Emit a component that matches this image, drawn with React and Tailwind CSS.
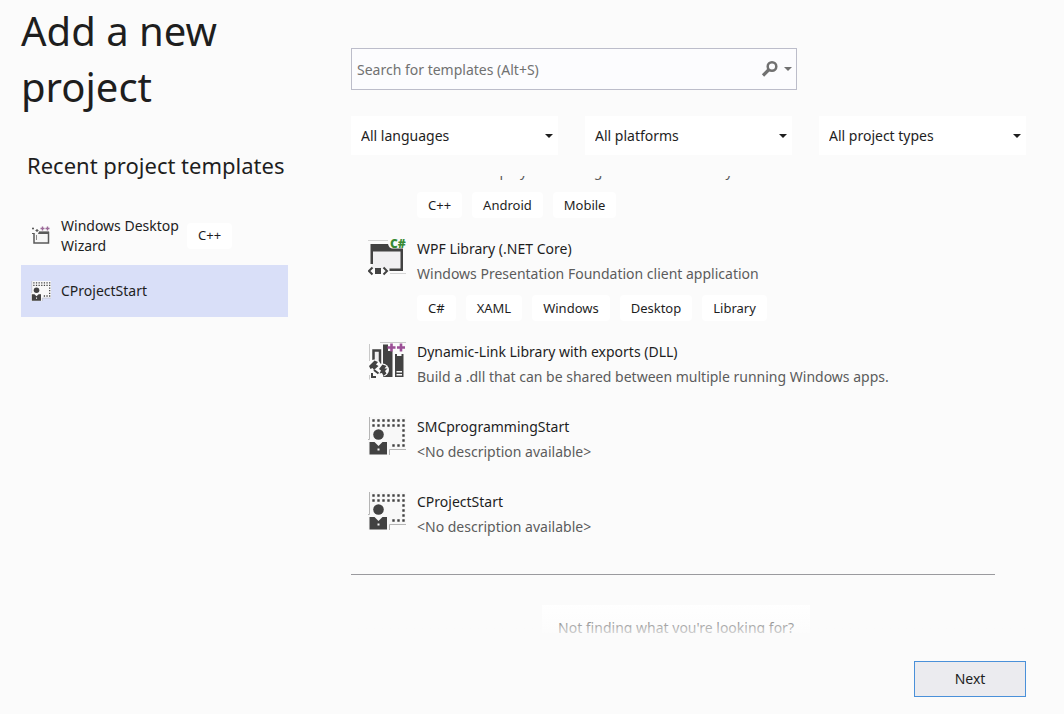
import { useState } from "react";

const templates = [
  {
    id: "android",
    icon: null,
    title: "Shared Library (Android)",
    description: "Build and deploy code using one Android library",
    tags: ["C++", "Android", "Mobile"],
  },
  {
    id: "wpf",
    icon: "wpf",
    title: "WPF Library (.NET Core)",
    description: "Windows Presentation Foundation client application",
    tags: ["C#", "XAML", "Windows", "Desktop", "Library"],
  },
  {
    id: "dll",
    icon: "dll",
    title: "Dynamic-Link Library with exports (DLL)",
    description: "Build a .dll that can be shared between multiple running Windows apps.",
    tags: [],
  },
  { id: "smc", icon: "custom", title: "SMCprogrammingStart", description: "<No description available>", tags: [] },
  { id: "cproject", icon: "custom", title: "CProjectStart", description: "<No description available>", tags: [] },
];

const filters = [
  { label: "Language", options: ["All languages", "C#", "C++", "Python"] },
  { label: "Platform", options: ["All platforms", "Android", "Linux", "Windows"] },
  { label: "Project type", options: ["All project types", "Desktop", "Library", "Mobile"] },
];

const WpfIcon = () => (
  <svg width="38" height="38" viewBox="0 0 38 38" aria-hidden="true">
    <path d="M0 1.5H20M22 34.5H38" stroke="#d4d4d4" fill="none" />
    <path d="M4 12H33V30H4Z" fill="#f0eff1" />
    <path d="M2.5 5H35V32H21.5V29.5H32.5V12.5H5V25H2.5Z" fill="#424242" />
    <path d="M21 0H38V9.500H24Q21 9 20 5Z" fill="#fbfbfb" />
    <text x="22" y="9" fontSize="12" fontWeight="800" fontFamily="Open Sans" fill="#388a34">C#</text>
    <path d="M4.500 28.500L1 32L4.500 35.500M15.500 28.500L19 32L15.500 35.500" stroke="#424242" strokeWidth="2" fill="none" />
    <path d="M7 29H13V35H7Z" fill="#424242" />
  </svg>
);

const DllIcon = () => (
  <svg width="38" height="38" viewBox="0 0 38 38" aria-hidden="true">
    <path d="M1.500 2V19M12 .5H38M1.500 33V37.500" stroke="#c9c9c9" fill="none" />
    <path d="M5.500 20V8.500H12V24" stroke="#424242" strokeWidth="2.500" fill="#f0eff1" />
    <path d="M15 2.500H20V9H24.500V35H15Z" fill="#424242" />
    <path d="M27 12H35.500V35H27Z" fill="#424242" />
    <path d="M29 11H33.500V14H29ZM28.500 29H34V30.500H28.500ZM28.500 32H34V33.500H28.500Z" fill="#fbfbfb" />
    <path d="M22 5.500H38" stroke="#fbfbfb" strokeWidth="4" />
    <path d="M23.500 1.500V9.500M19.500 5.500H27.500M33 1.500V9.500M29 5.500H37" stroke="#9b4f96" strokeWidth="2.600" />
    <circle cx="6.500" cy="24" r="6.500" fill="#fbfbfb" />
    <circle cx="14.500" cy="28" r="6.500" fill="#fbfbfb" />
    <path d="M1 24L6.500 18.500L10 20L8 22.500L10.500 24L6 28L4.500 26L2.500 27Z" fill="#424242" />
    <path d="M11 27L14.500 22.500L18.500 24L16.500 26.500H19.500L17 29L18.500 31.500L15.500 34L14 31L11.500 31.500L13 28.500Z" fill="#424242" />
    <path d="M6 28L10.500 31.500M4 31V35H8" stroke="#424242" strokeWidth="2" fill="none" />
  </svg>
);

const CustomIcon = ({ size = 38 }) => (
  <svg width={size} height={size} viewBox="0 0 38 38" aria-hidden="true">
    <path d="M2 0H38V32H21V38H0V23H2Z" fill="#f8f8f8" />
    <path d="M1.500 0V22.500H-1M21.500 39V32.500H38" stroke="#b5b5b5" fill="none" />
    <path
      d="M4.300 3.500H37M4.300 8.500H37M34.300 13.500H37M34.300 18.500H37M34.300 23.500H37M24.300 28.500H37"
      stroke="#424242"
      strokeWidth="2.400"
      strokeDasharray="2.400 2.600"
      fill="none"
    />
    <circle cx="10.500" cy="17.500" r="5.300" fill="#424242" />
    <path d="M1.500 25H6.500L10.500 29L14.500 25H19V37.500H1.500Z" fill="#424242" />
    <path d="M9.500 31.500H11.500V33.500H9.500Z" fill="#f8f8f8" />
  </svg>
);

const WizardIcon = () => (
  <svg width="20" height="20" viewBox="0 0 20 20" aria-hidden="true">
    <path d="M3 7V17H17.500V6.500H8" stroke="#5a5a5a" strokeWidth="1.500" fill="#f6f6f6" />
    <path d="M8 5.500H18V8H7Z" fill="#5a5a5a" />
    <path d="M5.500 9V14" stroke="#8a8a8a" strokeWidth="1" />
    <path d="M1 2.500H3M2 1.500V3.500M4.500 4.500H7.500M6 3V6M1 7.500H3" stroke="#5a5a5a" strokeWidth="1.200" />
    <path d="M9.500 2.500H13.500M11.500 .5V4.500M14.500 2.500H18.500M16.500 .5V4.500" stroke="#9b6a98" strokeWidth="1.400" />
  </svg>
);

const TemplateIcon = ({ name }) => {
  if (name === "wpf") return <WpfIcon />;
  if (name === "dll") return <DllIcon />;
  if (name === "custom") return <CustomIcon />;
  return null;
};

const Caret = ({ className }) => (
  <svg width="8" height="4" viewBox="0 0 8 4" className={className} aria-hidden="true">
    <path d="M0 0H8L4 4Z" fill="currentColor" />
  </svg>
);

const Tag = ({ children }) => <span className="flex h-[26px] items-center rounded-sm bg-white px-[11px] text-[13px]">{children}</span>;

const App = () => {
  const [search, setSearch] = useState("");
  const [selected, setSelected] = useState("cproject");

  return (
    <div className="flex h-screen flex-col bg-[#fbfbfb] pr-[38px] pl-[21px] font-['Noto_Sans','Open_Sans',sans-serif] text-sm text-[#1e1e1e]">
      <div className="flex min-h-0 flex-1 gap-[63px]">
        <aside className="w-[267px] shrink-0">
          <h1 className="pt-[3px] text-[40px] leading-[56px]">
            Add a new
            <br />
            project
          </h1>
          <h2 className="mt-[34px] pl-[6px] text-[22px] leading-8 whitespace-nowrap">Recent project templates</h2>
          <div className="mt-[25px]">
            <button onClick={() => setSelected("wizard")} className={`flex h-[59px] w-full items-center px-[10px] text-left ${selected === "wizard" ? "bg-[#d9dff8]" : ""}`}>
              <WizardIcon />
              <span className="ml-[10px] w-[126px] leading-5">Windows Desktop Wizard</span>
              <Tag>C++</Tag>
            </button>
            <button onClick={() => setSelected("cproject")} className={`flex h-[52px] w-full items-center px-[10px] text-left ${selected === "cproject" ? "bg-[#d9dff8]" : ""}`}>
              <CustomIcon size={20} />
              <span className="ml-[10px]">CProjectStart</span>
            </button>
          </div>
        </aside>

        <main className="flex min-w-0 flex-1 flex-col pt-12">
          <div className="flex h-[42px] w-[66%] items-center border border-[#bcbdca] bg-[#fcfcfe] pr-1 pl-[5px] text-[#717171]">
            <input
              aria-label="Search for templates"
              value={search}
              onChange={(event) => setSearch(event.target.value)}
              placeholder="Search for templates (Alt+S)"
              className="h-full min-w-0 flex-1 outline-none placeholder:text-[#717171]"
            />
            <button aria-label="Search">
              <svg width="18" height="18" viewBox="0 0 18 18" aria-hidden="true">
                <circle cx="11" cy="6.500" r="4.300" stroke="currentColor" strokeWidth="2.500" fill="none" />
                <path d="M8 9.500L2 15.500" stroke="currentColor" strokeWidth="3.200" />
              </svg>
            </button>
            <button aria-label="Search history" className="ml-[5px]">
              <Caret />
            </button>
          </div>

          <div className="mt-[26px] grid grid-cols-3 gap-[27px]">
            {filters.map((filter) => (
              <div key={filter.label} className="relative">
                <select aria-label={filter.label} className="h-[39px] w-full appearance-none bg-white px-[10px] outline-none">
                  {filter.options.map((option) => (
                    <option key={option}>{option}</option>
                  ))}
                </select>
                <Caret className="pointer-events-none absolute top-[18px] right-[5px]" />
              </div>
            ))}
          </div>

          <div className="relative mt-[21px] min-h-0 flex-1 overflow-hidden">
            <ul className="-mt-[43px]">
              {templates.map((template) => (
                <li key={template.id} className={`flex pl-[17px] ${template.tags.length > 0 ? "pb-[18px]" : "pb-[25px]"}`}>
                  <div className="w-[49px] shrink-0 pt-[3px]">
                    <TemplateIcon name={template.icon} />
                  </div>
                  <div className="min-w-0">
                    <h3 className="leading-[25px]">{template.title}</h3>
                    <p className="leading-[25px] text-[#5c5c5c]">{template.description}</p>
                    {template.tags.length > 0 && (
                      <div className="mt-[9px] flex gap-[10px]">
                        {template.tags.map((tag) => (
                          <Tag key={tag}>{tag}</Tag>
                        ))}
                      </div>
                    )}
                  </div>
                </li>
              ))}
            </ul>
            <div className="mr-[31px] mt-[10px] border-t border-[#9a9a9e]" />
            <div className="mr-[25px] flex flex-col items-center pt-[30px]">
              <p className="bg-white px-4 pt-3 pb-6 leading-[22px]">Not finding what you're looking for?</p>
            </div>
            <div className="pointer-events-none absolute inset-x-0 bottom-0 h-8 bg-linear-to-t from-[#fbfbfb]/80 to-transparent" />
          </div>
        </main>
      </div>

      <footer className="flex justify-end pt-7 pb-[17px]">
        <button className="h-9 w-28 border border-[#4a90d9] bg-[#ebebef]">Next</button>
      </footer>
    </div>
  );
};

export default App;
